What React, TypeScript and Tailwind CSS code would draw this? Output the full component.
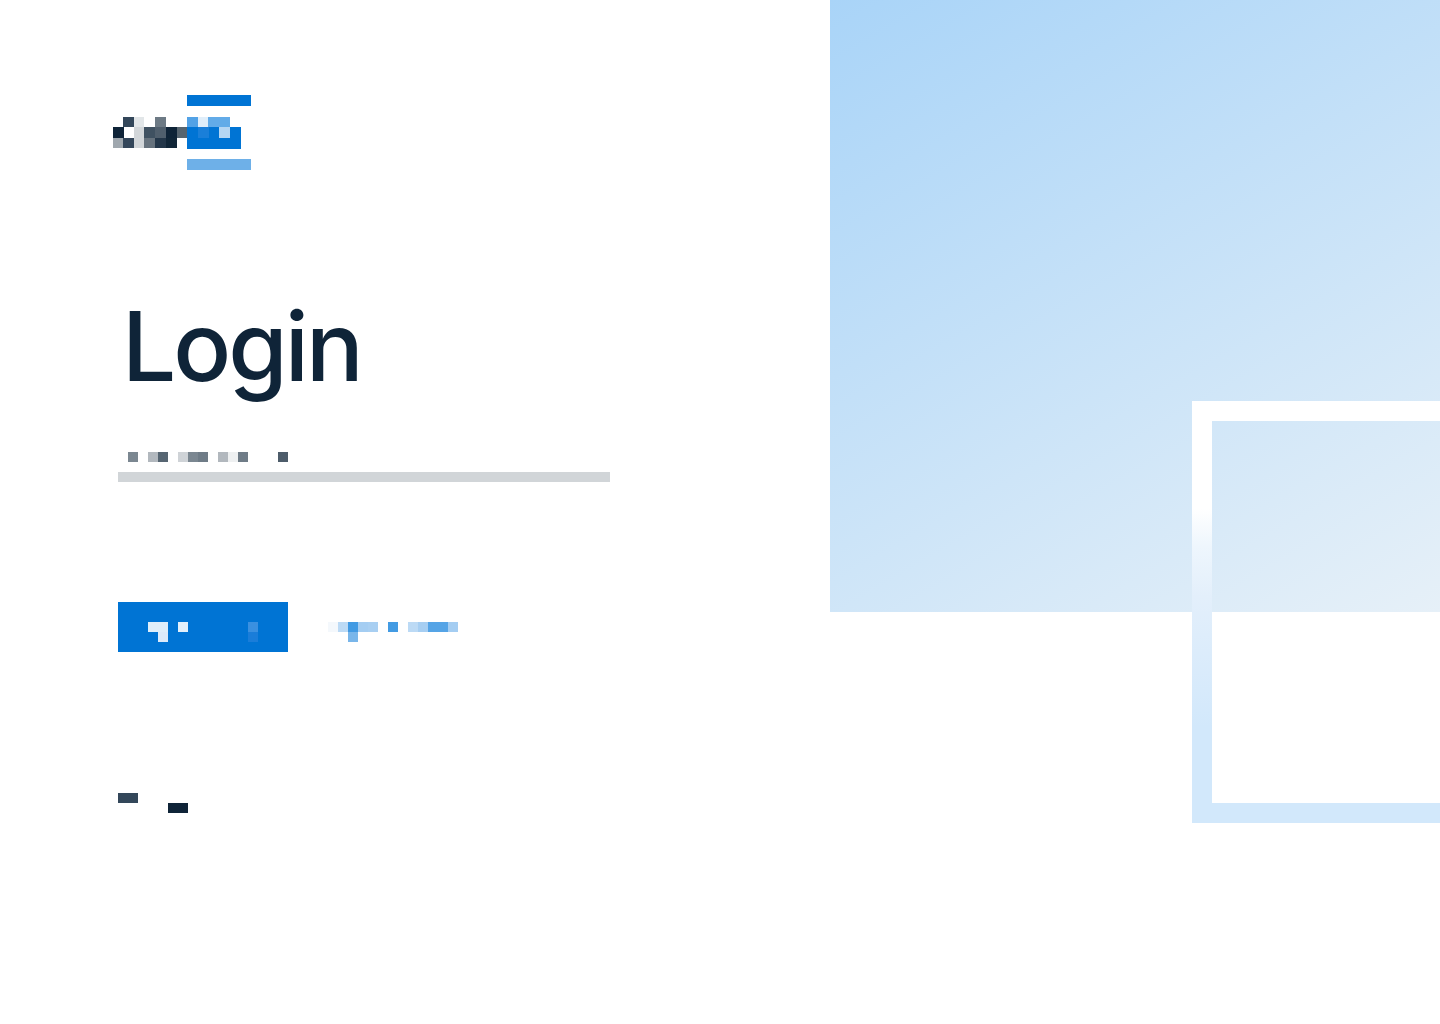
type Cell = [x: number, y: number, w: number, color: string]

// blocks are x, y, width, colour. the reference is a 10px mosaic so the small labels cant be read
const LOGO_CELLS: Cell[] = [
  [11, 22, 11, '#33475a'], [22, 22, 10, '#e2e6e8'], [43, 22, 11, '#6d7a85'],
  [1, 32, 11, '#0f2438'], [22, 32, 10, '#d2d6d9'], [32, 32, 11, '#3f5161'], [43, 32, 11, '#505f6d'], [54, 32, 11, '#0f2438'], [65, 32, 10, '#56646f'],
  [1, 43, 11, '#9fa7ae'], [11, 43, 11, '#33465a'], [22, 43, 10, '#d2d6d9'], [32, 43, 11, '#66727d'], [43, 43, 11, '#24374a'], [54, 43, 11, '#112638'],
]

const HINT_CELLS: Cell[] = [
  [10, 0, 10, '#7b8791'], [30, 0, 10, '#b2b8be'], [40, 0, 10, '#566572'], [60, 0, 10, '#cfd3d7'], [70, 0, 10, '#7b8791'], [80, 0, 10, '#6f7c87'],
  [100, 0, 10, '#b2b8be'], [110, 0, 10, '#eef0f1'], [120, 0, 10, '#6f7c87'], [160, 0, 10, '#4d5c6a'],
]

const BUTTON_CELLS: Cell[] = [
  [0, 0, 20, '#dfeefa'], [10, 10, 10, '#dceafa'], [30, 0, 10, '#e3f0fb'], [100, 0, 10, '#3a90e0'], [100, 10, 10, '#1a7dd9'],
]

const LINK_CELLS: Cell[] = [
  [0, 0, 10, '#f4f8fc'], [10, 0, 10, '#bcdaf5'], [20, 0, 10, '#419ae3'], [30, 0, 10, '#a4cdf2'], [40, 0, 10, '#a8cff2'], [20, 10, 10, '#79b6ea'],
  [60, 0, 10, '#439be3'], [80, 0, 10, '#bcdaf5'], [90, 0, 10, '#a6cef2'], [100, 0, 20, '#55a4e6'], [120, 0, 10, '#a4cdf2'],
]

const FOOT_CELLS: Cell[] = [
  [0, 0, 20, '#33475a'], [50, 10, 20, '#0f2438'],
]

function Mosaic({ cells, width, height, rowHeight = 10, className }: { cells: Cell[]; width: number; height: number; rowHeight?: number; className?: string }) {
  return (
    <svg width={width} height={height} viewBox={`0 0 ${width} ${height}`} className={className} shapeRendering="crispEdges">
      {cells.map(([x, y, w, color]) => (
        <rect key={`${x}-${y}`} x={x} y={y} width={w} height={rowHeight} fill={color} />
      ))}
    </svg>
  )
}

function Logo() {
  return (
    <svg width={140} height={75} viewBox="0 0 140 75" className="-ml-[6px] block" shapeRendering="crispEdges">
      <rect x={75} y={0} width={64} height={11} fill="#0074d4" />
      <rect x={75} y={64} width={64} height={11} fill="#6eb0e8" />
      <rect x={75} y={22} width={11} height={10} fill="#52a2e6" />
      <rect x={86} y={22} width={10} height={10} fill="#e0eefa" />
      <rect x={96} y={22} width={22} height={10} fill="#62abe8" />
      <rect x={75} y={32} width={54} height={22} fill="#0074d4" />
      <rect x={86} y={32} width={11} height={11} fill="#1a7fd9" />
      <rect x={107} y={32} width={11} height={11} fill="#b5d6f3" />
      {LOGO_CELLS.map(([x, y, w, color]) => (
        <rect key={`${x}-${y}`} x={x} y={y} width={w} height={y === 32 ? 11 : 10} fill={color} />
      ))}
    </svg>
  )
}

export default function App() {
  return (
    <div className="relative flex h-[1024px] overflow-hidden bg-white font-['Inter',sans-serif]">
      {/* left column */}
      <div className="flex-1 pl-[118px] pt-[95px]">
        <Logo />

        <h1 className="ml-[4px] mt-[128px] h-[96px] text-[96px] leading-none font-medium tracking-[-3px] text-[#0f2438]">Login</h1>

        <Mosaic cells={HINT_CELLS} width={170} height={10} className="mt-[58px] block" />
        <div className="mt-[10px] h-[10px] w-[492px] bg-[#d1d5d8]" />

        <div className="mt-[120px] flex items-center gap-[40px]">
          <button className="flex h-[50px] w-[170px] items-center bg-[#0074d4] pl-[30px] pt-[10px]">
            <Mosaic cells={BUTTON_CELLS} width={110} height={20} />
          </button>
          <a className="block pt-[10px]">
            <Mosaic cells={LINK_CELLS} width={130} height={20} />
          </a>
        </div>

        <Mosaic cells={FOOT_CELLS} width={70} height={20} className="mt-[141px] block" />
      </div>

      {/* gradient panel */}
      <div className="h-[612px] w-[610px] shrink-0 bg-[linear-gradient(150deg,#a9d4f8,#e6f0f8)]" />

      {/* frame sitting over the panel */}
      <div className="absolute left-[1192px] top-[401px] h-[422px] w-[248px] border-[20px] border-r-0 [border-image:linear-gradient(to_bottom,#ffffff_23%,#eef6fd_33%,#e3effb_46%,#d2e8fb_80%)_1]" />
    </div>
  )
}
